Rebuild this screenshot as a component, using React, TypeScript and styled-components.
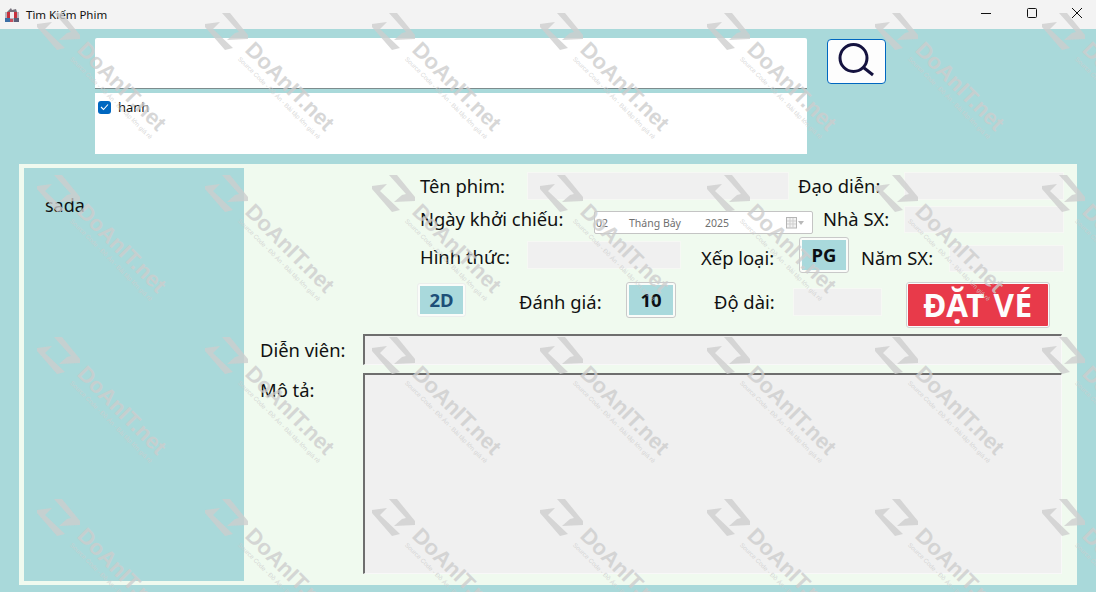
import { FC } from 'react'
import styled, { createGlobalStyle } from 'styled-components'

const GlobalStyle = createGlobalStyle`
  html, body {
    margin: 0;
    padding: 0;
    overflow: hidden;
  }
  body {
    font-family: 'Noto Sans', 'Open Sans', sans-serif;
    color: #111;
  }
`

const Window = styled.div`
  position: relative;
  width: 1096px;
  height: 592px;
  display: flex;
  flex-direction: column;
  background-color: #a9d9da;
  overflow: hidden;
`

const TitleBar = styled.div`
  height: 29px;
  flex-shrink: 0;
  display: flex;
  align-items: center;
  background-color: #f3f3f3;
  padding: 0 14px 0 4px;
`

const AppTitle = styled.span`
  margin-left: 6px;
  font-size: 11.5px;
  flex-grow: 1;
`

const WindowControls = styled.div`
  display: flex;
  gap: 35.5px;
  align-items: center;
  height: 100%;
  padding-bottom: 3px;
  box-sizing: border-box;
`

const SearchArea = styled.div`
  display: flex;
  padding: 9px 0 0 95px;
  height: 135px;
  flex-shrink: 0;
  box-sizing: border-box;
`

const SearchColumn = styled.div`
  width: 712px;
  display: flex;
  flex-direction: column;
`

const SearchInput = styled.div`
  height: 51px;
  flex-shrink: 0;
  box-sizing: border-box;
  background-color: #fff;
  border-bottom: 1.5px solid #7d8c8d;
  border-radius: 2px 2px 0 0;
`

const ResultList = styled.div`
  margin-top: 4px;
  height: 61px;
  background-color: #fff;
  padding: 7px 3px;
  box-sizing: border-box;
`

const CheckRow = styled.label`
  display: flex;
  align-items: center;
  gap: 7px;
  font-size: 13px;
  line-height: 14px;
`

const CheckBox = styled.span`
  width: 13px;
  height: 13px;
  border-radius: 3px;
  background-color: #0067c0;
  display: flex;
  align-items: center;
  justify-content: center;
`

const SearchButton = styled.button`
  width: 59px;
  height: 45px;
  margin: 1px 0 0 20px;
  padding: 0;
  background-color: #fdfdfd;
  border: 1px solid #0067c0;
  border-radius: 4px;
  display: flex;
  align-items: center;
  justify-content: center;
`

const Panel = styled.div`
  margin: 0 19px;
  height: 421px;
  display: flex;
  background-color: #f0faef;
  padding: 4px 13px 4px 5px;
  box-sizing: border-box;
`

const Poster = styled.div`
  width: 220px;
  flex-shrink: 0;
  background-color: #a9d9da;
  padding: 26px 21px;
  box-sizing: border-box;
  font-size: 18px;
  line-height: 22px;
`

const Form = styled.div`
  flex-grow: 1;
  display: flex;
  flex-direction: column;
  padding-top: 4px;
`

const Row = styled.div<{ $h: number; $pl: number }>`
  height: ${(p) => p.$h}px;
  flex-shrink: 0;
  display: flex;
  align-items: flex-start;
  padding-left: ${(p) => p.$pl}px;
`

const Label = styled.span<{ $w: number; $ml?: number; $mt?: number }>`
  width: ${(p) => p.$w}px;
  margin-left: ${(p) => p.$ml ?? 0}px;
  margin-top: ${(p) => p.$mt ?? 0}px;
  flex-shrink: 0;
  font-size: 18.4px;
  line-height: 28px;
  white-space: nowrap;
`

const Field = styled.div<{ $w: number; $h: number; $mt?: number }>`
  width: ${(p) => p.$w}px;
  height: ${(p) => p.$h}px;
  margin-top: ${(p) => p.$mt ?? 0}px;
  flex-shrink: 0;
  box-sizing: border-box;
  background-color: #f0f0f0;
  border: 1px solid #f6f8f4;
`

const SunkenField = styled.div<{ $h: number }>`
  width: 699px;
  height: ${(p) => p.$h}px;
  flex-shrink: 0;
  box-sizing: border-box;
  background-color: #f0f0f0;
  border-style: solid;
  border-width: 2px 1px 1px 2px;
  border-color: #6e6e6e #f8f8f8 #f8f8f8 #6e6e6e;
`

const DateBox = styled.div`
  width: 219px;
  height: 23px;
  margin-top: 6px;
  flex-shrink: 0;
  box-sizing: border-box;
  background-color: #fff;
  border: 1px solid #c4c4c4;
  border-radius: 2px;
  display: flex;
  align-items: center;
  padding: 0 6px 0 1px;
  font-size: 10.5px;
  color: #6f6f6f;
`

const DatePart = styled.span<{ $w: number }>`
  width: ${(p) => p.$w}px;
  flex-shrink: 0;
  white-space: nowrap;
`

const Rating = styled.div<{ $w: number; $h: number; $mt?: number; $muted?: boolean }>`
  width: ${(p) => p.$w}px;
  height: ${(p) => p.$h}px;
  margin-top: ${(p) => p.$mt ?? 0}px;
  flex-shrink: 0;
  box-sizing: border-box;
  padding: 2px;
  background-color: #fafcf9;
  border: 1px solid ${(p) => (p.$muted ? '#eceeec' : '#c9c9c9')};
  border-radius: 3px;
  font-size: 18.5px;
  font-weight: 700;
  color: ${(p) => (p.$muted ? '#1d4f78' : '#0b0f14')};
`

const RatingFace = styled.div`
  height: 100%;
  display: flex;
  align-items: center;
  justify-content: center;
  padding-bottom: 2px;
  box-sizing: border-box;
  background-color: #a9d9dc;
`

const BookButton = styled.button`
  width: 144px;
  height: 46px;
  margin-left: 24px;
  flex-shrink: 0;
  box-sizing: border-box;
  padding: 0 0 0 0;
  background-color: #e83a4a;
  border: 2px solid #fbfbfb;
  outline: 1px solid #d0d0d0;
  outline-offset: -1px;
  border-radius: 3px;
  color: #fdfdfd;
  font-family: inherit;
  font-size: 31.5px;
  font-weight: 700;
  letter-spacing: 0.5px;
  line-height: 38px;
  white-space: nowrap;
`

const WatermarkLayer = styled.div`
  position: absolute;
  top: 12px;
  left: 37px;
  display: grid;
  grid-template-columns: repeat(7, 167.5px);
  grid-auto-rows: 162px;
  pointer-events: none;
`

const Mark = styled.div`
  position: relative;
  color: rgba(205, 205, 205, 0.78);
  font-family: 'Liberation Sans', Arial, sans-serif;
`

const MarkName = styled.span`
  position: absolute;
  left: 44px;
  top: 22px;
  transform: rotate(45deg);
  transform-origin: 0 50%;
  font-size: 22px;
  line-height: 24px;
  font-weight: 700;
  white-space: nowrap;
`

const MarkNote = styled.span`
  position: absolute;
  left: 34px;
  top: 42px;
  transform: rotate(45deg);
  transform-origin: 0 50%;
  font-size: 6.3px;
  line-height: 8px;
  white-space: nowrap;
`

const Watermark: FC = () => (
  <Mark>
    <svg width="44" height="39" viewBox="0 0 44 39" fill="currentColor">
      <path d="M17 1 L25 1 L43 23 L43 27 L22 28 L30 21 L34 20 Z" />
      <path d="M0 12 L15 10 L8 17 L28 36 L20 38 L0 15 Z" />
    </svg>
    <MarkName>DoAnIT.net</MarkName>
    <MarkNote>Source Code - Đồ Án - Bài tập lớn giá rẻ</MarkNote>
  </Mark>
)

const AppIcon: FC = () => (
  <svg width="16" height="16" viewBox="0 0 16 16">
    <path d="M3 5 L7 1 L8 3 L12 2 L13 5 Z" fill="#77727c" />
    <rect x="1" y="5" width="14" height="10" fill="#b9b4bc" />
    <rect x="3" y="5" width="3" height="6" fill="#c8303c" />
    <rect x="10" y="5" width="3" height="6" fill="#c8303c" />
    <rect x="6" y="5" width="4" height="6" fill="#f4eef0" />
    <rect x="1" y="11" width="5" height="4" fill="#3a6ea5" />
    <rect x="6" y="12" width="3" height="3" fill="#c8505c" />
    <rect x="10" y="11" width="5" height="4" fill="#5a5f78" />
  </svg>
)

const CalendarIcon: FC = () => (
  <svg width="18" height="12" viewBox="0 0 18 12" fill="none">
    <rect x="0.5" y="0.5" width="10" height="10.5" fill="#f2f2f2" stroke="#b5b5b5" />
    <path d="M1 4 H10 M1 7 H10 M4 1 V11 M7 1 V11" stroke="#cfcfcf" />
    <path d="M12 4 H18 L15 8 Z" fill="#b9b9b9" />
  </svg>
)

export default function App() {
  return (
    <Window>
      <GlobalStyle />
      <TitleBar>
        <AppIcon />
        <AppTitle>Tìm Kiếm Phim</AppTitle>
        <WindowControls>
          <svg width="10" height="10" viewBox="0 0 10 10">
            <path d="M0 5.5 H10" stroke="#111" />
          </svg>
          <svg width="10" height="10" viewBox="0 0 10 10" fill="none">
            <rect x="0.5" y="0.5" width="9" height="9" rx="1" stroke="#111" />
          </svg>
          <svg width="10" height="10" viewBox="0 0 10 10">
            <path d="M0 0 L10 10 M10 0 L0 10" stroke="#111" />
          </svg>
        </WindowControls>
      </TitleBar>

      <SearchArea>
        <SearchColumn>
          <SearchInput />
          <ResultList>
            <CheckRow>
              <CheckBox>
                <svg width="9" height="8" viewBox="0 0 9 8" fill="none">
                  <path d="M1 4 L3.5 6.5 L8 1.5" stroke="#fff" strokeWidth="1.1" />
                </svg>
              </CheckBox>
              hanh
            </CheckRow>
          </ResultList>
        </SearchColumn>
        <SearchButton aria-label="Tìm kiếm">
          <svg width="38" height="38" viewBox="0 0 38 38" fill="none" stroke="#14123f">
            <circle cx="15.5" cy="15" r="13.5" strokeWidth="3" />
            <path d="M25.5 24.5 L35 32" strokeWidth="3" />
          </svg>
        </SearchButton>
      </SearchArea>

      <Panel>
        <Poster>sada</Poster>
        <Form>
          <Row $h={33} $pl={176}>
            <Label $w={107}>Tên phim:</Label>
            <Field $w={262} $h={28} />
            <Label $w={106} $ml={9}>Đạo diễn:</Label>
            <Field $w={160} $h={28} />
          </Row>
          <Row $h={32} $pl={176}>
            <Label $w={174}>Ngày khởi chiếu:</Label>
            <DateBox>
              <DatePart $w={33}>02</DatePart>
              <DatePart $w={76}>Tháng Bảy</DatePart>
              <DatePart $w={81}>2025</DatePart>
              <CalendarIcon />
            </DateBox>
            <Label $w={81} $ml={10}>Nhà SX:</Label>
            <Field $w={160} $h={27} $mt={1} />
          </Row>
          <Row $h={45} $pl={176}>
            <Label $w={107} $mt={6}>Hình thức:</Label>
            <Field $w={154} $h={28} $mt={4} />
            <Label $w={98} $ml={20} $mt={7}>Xếp loại:</Label>
            <Rating $w={50} $h={36}>
              <RatingFace>PG</RatingFace>
            </Rating>
            <Label $w={88} $ml={12} $mt={7}>Năm SX:</Label>
            <Field $w={115} $h={27} $mt={8} />
          </Row>
          <Row $h={52} $pl={173}>
            <Rating $w={49} $h={34} $mt={1} $muted>
              <RatingFace>2D</RatingFace>
            </Rating>
            <Label $w={107} $ml={53} $mt={6}>Đánh giá:</Label>
            <Rating $w={50} $h={36}>
              <RatingFace>10</RatingFace>
            </Rating>
            <Label $w={79} $ml={38} $mt={6}>Độ dài:</Label>
            <Field $w={89} $h={28} $mt={6} />
            <BookButton>ĐẶT VÉ</BookButton>
          </Row>
          <Row $h={39} $pl={16}>
            <Label $w={103} $mt={2}>Diễn viên:</Label>
            <SunkenField $h={31} />
          </Row>
          <Row $h={201} $pl={16}>
            <Label $w={103} $mt={3}>Mô tả:</Label>
            <SunkenField $h={201} />
          </Row>
        </Form>
      </Panel>

      <WatermarkLayer>
        {Array.from({ length: 28 }, (_, i) => (
          <Watermark key={i} />
        ))}
      </WatermarkLayer>
    </Window>
  )
}
